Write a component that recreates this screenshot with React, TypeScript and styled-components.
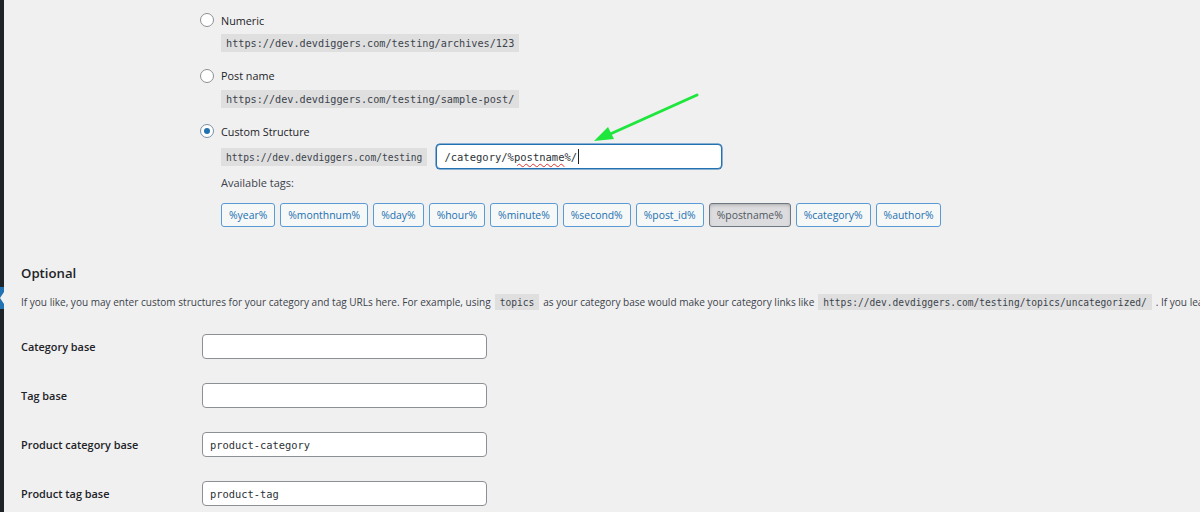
import React from 'react';
import styled, { createGlobalStyle } from 'styled-components';

const Global = createGlobalStyle`
  html, body { margin: 0; padding: 0; background: #f0f0f1; }
  body {
    font-family: "Open Sans", "Noto Sans", sans-serif;
    font-size: 10.7px;
    color: #3c434a;
  }
`;

const Shell = styled.div`
  position: relative;
  display: flex;
  width: 1200px;
  height: 512px;
  overflow: hidden;
  background: #f0f0f1;
`;

const Sidebar = styled.div`
  width: 4px;
  flex-shrink: 0;
  background: #1d2327;
  display: flex;
  flex-direction: column;
`;

const CurrentMenu = styled.div`
  margin-top: 287px;
  height: 22px;
  background: #2271b1;
  position: relative;
  &::after {
    content: "";
    position: absolute;
    right: 0;
    top: 5px;
    border-style: solid;
    border-width: 6px 4px 6px 0;
    border-color: transparent #f0f0f1 transparent transparent;
  }
`;

const Main = styled.main`
  flex: 1;
  padding: 13px 0 0 17px;
  min-width: 0;
`;

const TopSection = styled.div`
  padding-left: 179px;
  display: flex;
  flex-direction: column;
`;

const OptionBlock = styled.div`
  display: flex;
  flex-direction: column;
  margin-bottom: 16.5px;
`;

const RadioRow = styled.label`
  display: flex;
  align-items: center;
  gap: 7px;
  height: 14px;
  color: #1d2327;
  font-weight: 500;
  font-size: 10.8px;
`;

const Radio = styled.span<{ $checked?: boolean }>`
  width: 14px;
  height: 14px;
  box-sizing: border-box;
  border-radius: 50%;
  border: 1px solid ${p => (p.$checked ? '#7b8fa3' : '#8c8f94')};
  background: #fff;
  display: flex;
  align-items: center;
  justify-content: center;
  &::before {
    content: "";
    width: 6px;
    height: 6px;
    border-radius: 50%;
    background: ${p => (p.$checked ? '#2271b1' : 'transparent')};
  }
`;

const Code = styled.code<{ $small?: boolean }>`
  font-family: "DejaVu Sans Mono", "Liberation Mono", monospace;
  font-size: ${p => (p.$small ? '9.6px' : '10.2px')};
  line-height: 13px;
  padding: 3px 5px 2px;
  background: rgba(0, 0, 0, 0.07);
  color: #3c434a;
  white-space: nowrap;
`;

const OptionDetail = styled.div`
  margin-top: 7px;
  margin-left: 21px;
  display: flex;
  align-items: center;
  gap: 9px;
  height: 18px;
`;

const CustomDetail = styled(OptionDetail)`
  margin-top: 6px;
  height: 25px;
`;

const FakeInput = styled.div`
  width: 286px;
  height: 25px;
  box-sizing: border-box;
  border: 1px solid #2271b1;
  box-shadow: 0 0 0 0.5px #2271b1;
  border-radius: 4px;
  background: #fff;
  display: flex;
  align-items: center;
  padding-left: 7px;
  font-family: "DejaVu Sans Mono", "Liberation Mono", monospace;
  font-size: 10.5px;
  color: #2c3338;
  white-space: pre;
`;

const Misspelled = styled.span`
  text-decoration: underline wavy #e0322d;
  text-decoration-thickness: 1px;
  text-underline-offset: 2px;
`;

const Caret = styled.span`
  display: inline-block;
  width: 1px;
  height: 15px;
  background: #1d2327;
  margin-left: 1px;
`;

const AvailableLabel = styled.div`
  margin-top: 7px;
  margin-left: 21px;
  line-height: 14px;
  font-size: 11px;
  color: #3c434a;
`;

const TagList = styled.div`
  margin-top: 13px;
  margin-left: 21px;
  display: flex;
  gap: 5px;
`;

const TagButton = styled.button<{ $pressed?: boolean }>`
  height: 24px;
  padding: 0 7px;
  box-sizing: border-box;
  border-radius: 3px;
  font-family: "Open Sans", "Noto Sans", sans-serif;
  font-size: 10.4px;
  cursor: pointer;
  border: 1px solid ${p => (p.$pressed ? '#6c7781' : '#5b9bd5')};
  background: ${p => (p.$pressed ? '#dcdcde' : '#f6f7f7')};
  color: ${p => (p.$pressed ? '#50575e' : '#2271b1')};
  box-shadow: ${p => (p.$pressed ? 'inset 0 2px 5px -3px rgba(0,0,0,0.5)' : 'none')};
`;

const SectionTitle = styled.h2`
  margin: 37px 0 0;
  font-size: 13.2px;
  line-height: 18px;
  font-weight: 600;
  color: #1d2327;
`;

const Description = styled.p`
  margin: 11px 0 0;
  line-height: 18px;
  font-size: 10.05px;
  white-space: nowrap;
  color: #3c434a;
  & > code {
    margin: 0 4px;
  }
`;

const FormTable = styled.div`
  margin-top: 23px;
  display: flex;
  flex-direction: column;
  gap: 24px;
`;

const FormRow = styled.div`
  display: grid;
  grid-template-columns: 181px 285px;
  align-items: center;
`;

const RowLabel = styled.label`
  font-weight: 600;
  font-size: 10.9px;
  color: #1d2327;
`;

const TextInput = styled.input`
  height: 25px;
  box-sizing: border-box;
  border: 1px solid #8c8f94;
  border-radius: 4px;
  background: #fff;
  padding: 0 7px;
  font-family: "DejaVu Sans Mono", "Liberation Mono", monospace;
  font-size: 10.4px;
  color: #2c3338;
  outline: none;
`;

const ArrowLayer = styled.svg`
  position: absolute;
  left: 0;
  top: 0;
  pointer-events: none;
`;

const options = [
  { label: 'Numeric', url: 'https://dev.devdiggers.com/testing/archives/123' },
  { label: 'Post name', url: 'https://dev.devdiggers.com/testing/sample-post/' },
];

const tags = [
  '%year%', '%monthnum%', '%day%', '%hour%', '%minute%', '%second%',
  '%post_id%', '%postname%', '%category%', '%author%',
];

const rows = [
  { label: 'Category base', value: '' },
  { label: 'Tag base', value: '' },
  { label: 'Product category base', value: 'product-category' },
  { label: 'Product tag base', value: 'product-tag' },
];

export default function App() {
  return (
    <>
      <Global />
      <Shell>
        <Sidebar>
          <CurrentMenu />
        </Sidebar>
        <Main>
          <TopSection>
            {options.map(o => (
              <OptionBlock key={o.label}>
                <RadioRow>
                  <Radio />
                  {o.label}
                </RadioRow>
                <OptionDetail>
                  <Code>{o.url}</Code>
                </OptionDetail>
              </OptionBlock>
            ))}
            <RadioRow>
              <Radio $checked />
              Custom Structure
            </RadioRow>
            <CustomDetail>
              <Code $small>https://dev.devdiggers.com/testing</Code>
              <FakeInput role="textbox">
                /category/%<Misspelled>postname</Misspelled>%/<Caret />
              </FakeInput>
            </CustomDetail>
            <AvailableLabel>Available tags:</AvailableLabel>
            <TagList>
              {tags.map(t => (
                <TagButton key={t} $pressed={t === '%postname%'}>
                  {t}
                </TagButton>
              ))}
            </TagList>
          </TopSection>

          <SectionTitle>Optional</SectionTitle>
          <Description>
            If you like, you may enter custom structures for your category and tag URLs here. For example, using
            <Code $small>topics</Code>as your category base would make your category links like
            <Code $small>https://dev.devdiggers.com/testing/topics/uncategorized/</Code>. If you leave these blank the defaults will be used.
          </Description>

          <FormTable>
            {rows.map(r => (
              <FormRow key={r.label}>
                <RowLabel>{r.label}</RowLabel>
                <TextInput defaultValue={r.value} />
              </FormRow>
            ))}
          </FormTable>
        </Main>
        <ArrowLayer width="1200" height="512" viewBox="0 0 1200 512">
          <line x1="697" y1="95" x2="608" y2="135" stroke="#1fe63c" strokeWidth="3" strokeLinecap="round" />
          <polygon points="594,141 608,127 614,139" fill="#1fe63c" />
        </ArrowLayer>
      </Shell>
    </>
  );
}
